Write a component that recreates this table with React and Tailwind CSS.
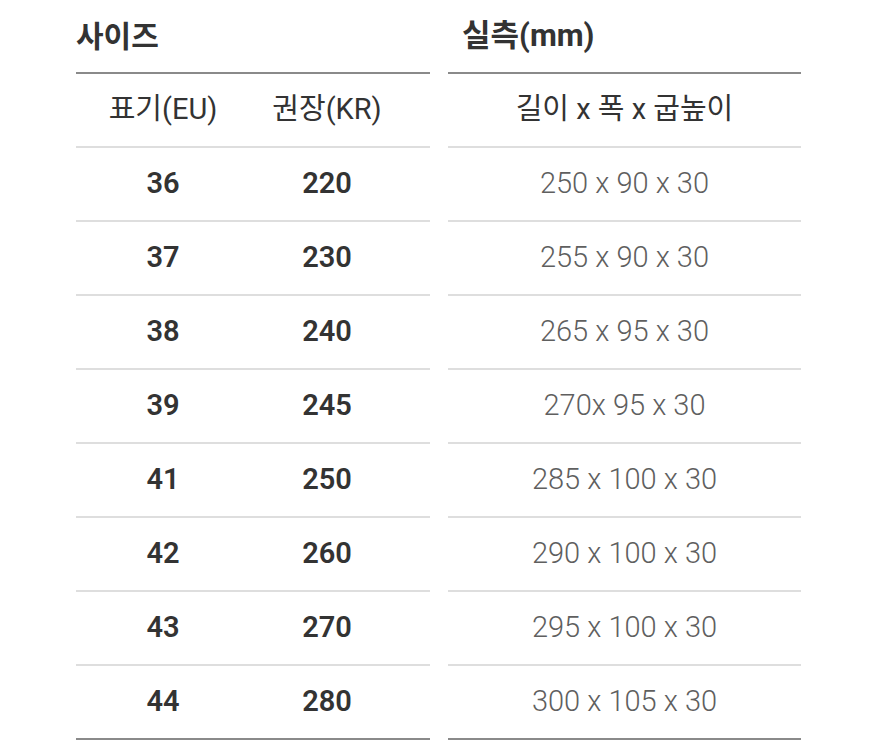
import React from "react";

const rows = [
  ["36", "220", "250 x 90 x 30"],
  ["37", "230", "255 x 90 x 30"],
  ["38", "240", "265 x 95 x 30"],
  ["39", "245", "270x 95 x 30"],
  ["41", "250", "285 x 100 x 30"],
  ["42", "260", "290 x 100 x 30"],
  ["43", "270", "295 x 100 x 30"],
  ["44", "280", "300 x 105 x 30"],
];

const font = { fontFamily: "Roboto, 'Noto Sans CJK KR', 'Noto Sans', sans-serif" };

export default function App() {
  return (
    <div className="w-[877px] h-[750px] bg-white text-[#333]" style={font}>
      <div className="flex gap-[18px] pl-[76px]">
        {/* Left table */}
        <div className="w-[354px] flex flex-col">
          <div className="h-[72px] flex items-center text-[30px] font-bold border-b-2 border-[#8a8a8a] box-content">
            사이즈
          </div>
          <div className="h-[72px] grid grid-cols-[174px_154px_1fr] items-center text-[29px] border-b-2 border-[#dedede] box-content">
            <div className="text-center">표기(EU)</div>
            <div className="text-center">권장(KR)</div>
            <div />
          </div>
          {rows.map((r, i) => (
            <div
              key={i}
              className={`h-[72px] grid grid-cols-[174px_154px_1fr] items-center text-[29px] font-semibold box-content border-b-2 ${
                i === rows.length - 1 ? "border-[#8a8a8a]" : "border-[#dedede]"
              }`}
            >
              <div className="text-center">{r[0]}</div>
              <div className="text-center">{r[1]}</div>
              <div />
            </div>
          ))}
        </div>
        {/* Right table */}
        <div className="w-[353px] flex flex-col">
          <div className="h-[72px] flex items-center pl-[14px] text-[31px] font-bold border-b-2 border-[#8a8a8a] box-content">
            실측(mm)
          </div>
          <div className="h-[72px] flex items-center justify-center text-[29px] border-b-2 border-[#dedede] box-content">
            길이 x 폭 x 굽높이
          </div>
          {rows.map((r, i) => (
            <div
              key={i}
              className={`h-[72px] flex items-center justify-center text-[29px] font-light text-[#5f5f5f] box-content border-b-2 ${
                i === rows.length - 1 ? "border-[#8a8a8a]" : "border-[#dedede]"
              }`}
            >
              {r[2]}
            </div>
          ))}
        </div>
      </div>
    </div>
  );
}
